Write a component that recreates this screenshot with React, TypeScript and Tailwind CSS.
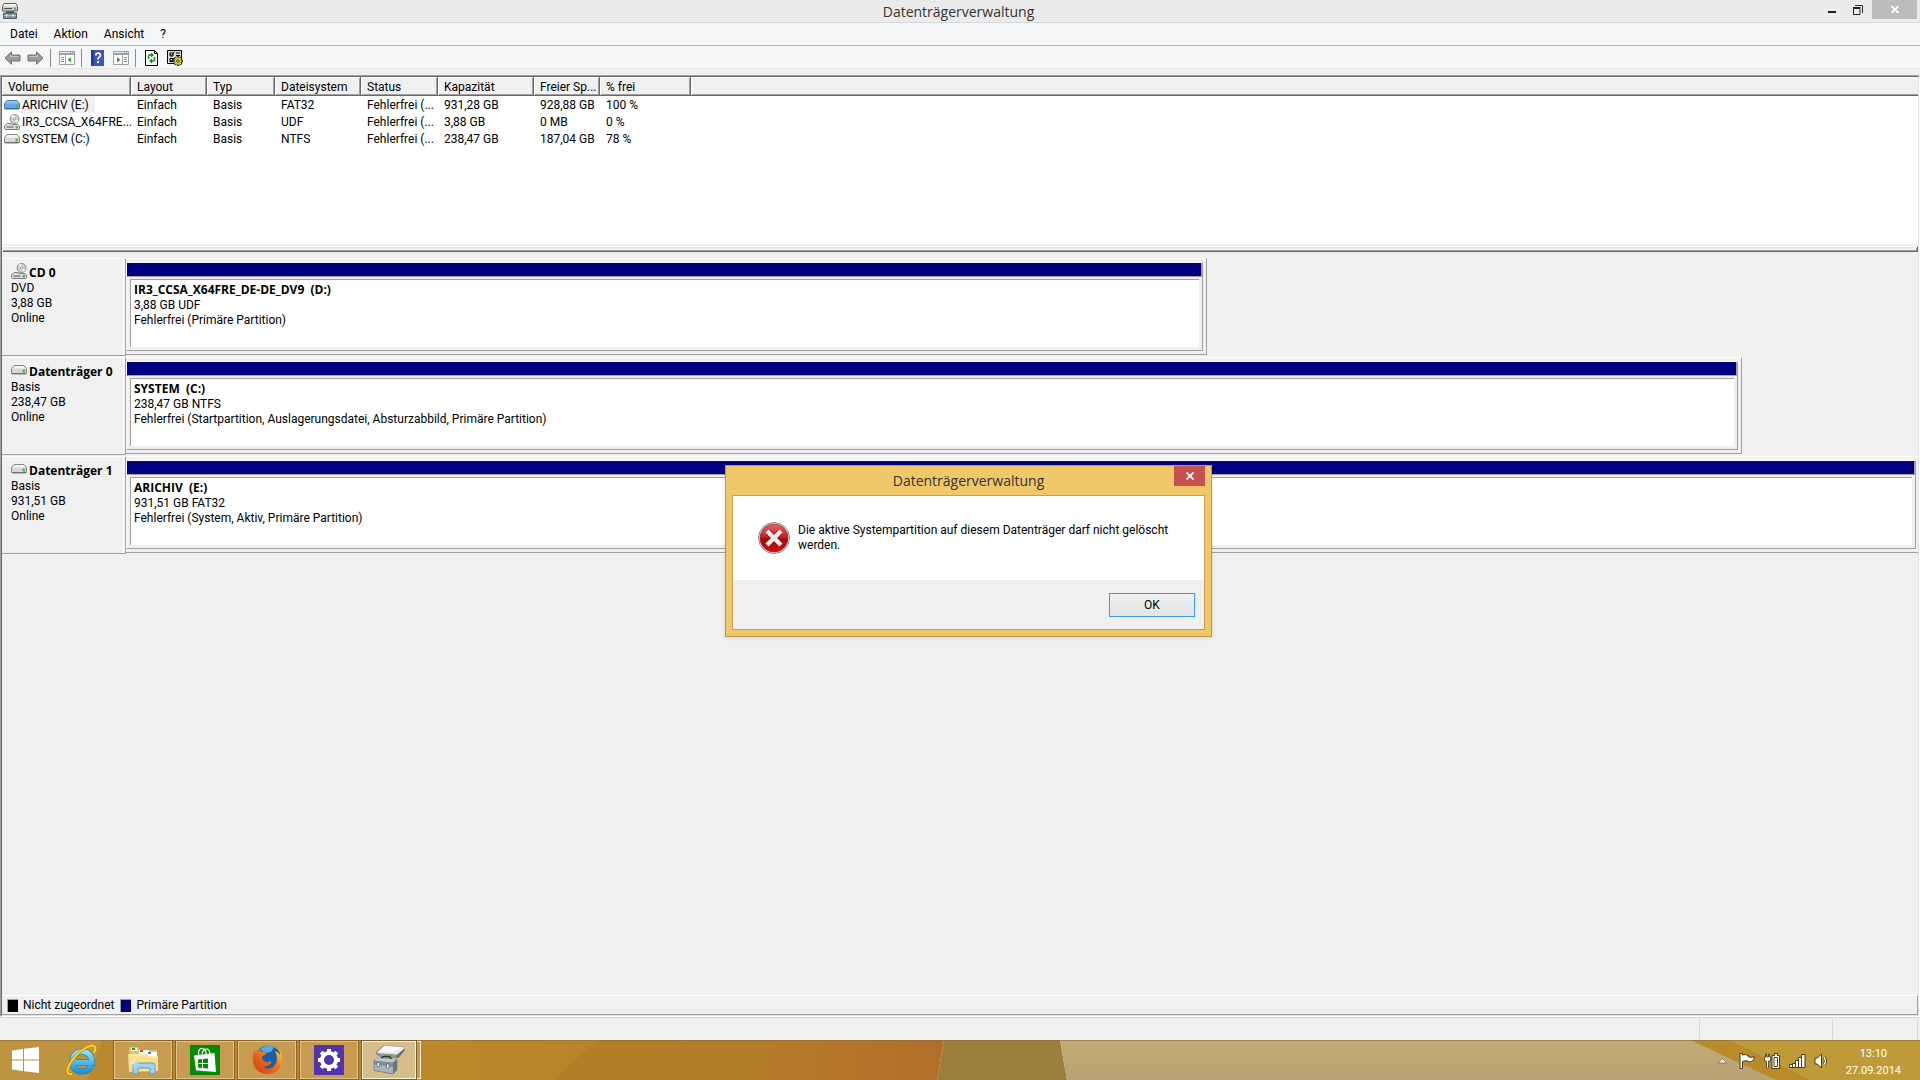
import type { ReactNode } from "react";

interface Volume {
    name: string;
    fileSystem: string;
    capacity: string;
    free: string;
    percent: string;
    icon: ReactNode;
}

interface Disk {
    name: string;
    type: string;
    size: string;
    icon: ReactNode;
    partition: string;
    partitionSize: string;
    status: string;
    widthClass: string;
    frameClass: string;
}

function DriveIcon({ blue = false }: { blue?: boolean }) {
    return (
        <svg width="16" height="10" viewBox="0 0 16 10" className="shrink-0">
            <path
                d="M3 .5h10l2.5 3v4.5q0 1-1 1h-13q-1 0-1-1v-4.500z"
                fill={blue ? "#6aa9e0" : "#d8d8dc"}
                stroke={blue ? "#3d7fbd" : "#85858a"}
            />
            <path d="M3.500 1h9l2 2.500h-13z" fill={blue ? "#93c6f0" : "#f4f4f4"} />
            <path d="M1 8.500h14" stroke={blue ? "#2f6ba6" : "#6d6d72"} />
            <rect x="11.500" y="4.500" width="2.500" height="3" fill="#4fc02c" />
        </svg>
    );
}

function DiscDriveIcon() {
    return (
        <svg width="16" height="16" viewBox="0 0 16 16" className="shrink-0">
            <circle cx="10.500" cy="5" r="4.500" fill="#d4d4d4" stroke="#8a8a8a" />
            <path d="M10.500 5 7.500 2l2-1.200zM10.500 5l3.500 2-1.500 1.800z" fill="#fff" />
            <path d="M10.500 5l3.800-1.500v2z" fill="#b9d7a6" />
            <circle cx="10.500" cy="5" r="1.200" fill="#fff" stroke="#8a8a8a" strokeWidth=".8" />
            <path d="M3 9.500h3l3 1h4.500l2 1.500v2.500q0 1-1 1h-13q-1 0-1-1v-2.500z" fill="#dfdfe1" stroke="#7b7b80" />
            <path d="M2.500 13h7" stroke="#4d4d52" />
            <rect x="11.500" y="12" width="2.500" height="2.500" fill="#4fc02c" />
        </svg>
    );
}

function SmallAppIcon() {
    return (
        <svg width="16" height="16" viewBox="0 0 16 16">
            <path d="M2 .5h12l1.500 3v4.500h-15v-4.500z" fill="#c9cbcd" stroke="#5d6165" />
            <path d="M2.500 1h11l1.200 2.500h-13.400z" fill="#f3f3f3" />
            <path d="M2 5.500h8" stroke="#4a4d50" />
            <path d="M12 4.500h2v2.500h-2z" fill="#35d035" />
            <path d="M4 9.500h8" stroke="#33393d" strokeWidth="2" />
            <path d="M1.500 10h13v5.500h-13z" fill="#7c929c" stroke="#4e616b" />
            <path d="M2 12.500h12" stroke="#b6c5cc" />
            <path d="M4 11.500h1.500v2h-1.500zM10.500 11.500h1.500v2h-1.500z" fill="#e3eaed" />
        </svg>
    );
}

function AppIcon() {
    return (
        <svg width="32" height="32" viewBox="0 0 32 32">
            <path d="M10 1.500 30 3q2 1 1.500 3l-6 7.500-18-1-4-2.500v-2z" fill="#96999b" stroke="#6c6f71" strokeWidth=".6" />
            <path d="M11 1.500 30 3l1.500 1.500-7 6-20-1.500v-1z" fill="#e9eaea" />
            <path d="M12 2.500 28 3.500l-6 4.500-14-1z" fill="#f8f8f8" />
            <path d="M24 11l7-6v2l-6 7h-2z" fill="#6b6e70" />
            <path d="M15.500 10.500h3v4h-3z" fill="#37c837" />
            <path d="M8 18v-2q.5-3.500 4-3.500h3q3 .3 3.500 3.500v2" fill="none" stroke="#2d3336" strokeWidth="1.500" />
            <path d="M1 16.500 4 14l20 1.500v10l-4 4.500-19-3.500z" fill="#7f8f98" stroke="#5c6b73" strokeWidth=".6" />
            <path d="M1 16.500 4 14l20 1.500-4 3z" fill="#bac7cd" />
            <path d="M1.500 20.500l18.500 2.500v6.500l-18.500-3.500z" fill="#a6b4bc" />
            <path d="M20 18.500l4-3v10l-4 4.500z" fill="#697981" />
            <path d="M4 18.500h2.500v4h-2.500zM13.500 20h2.500v4h-2.500z" fill="#eef2f4" stroke="#54626a" strokeWidth=".7" />
        </svg>
    );
}

const volumes: Volume[] = [
    { name: "ARICHIV (E:)", fileSystem: "FAT32", capacity: "931,28 GB", free: "928,88 GB", percent: "100 %", icon: <DriveIcon blue /> },
    { name: "IR3_CCSA_X64FRE...", fileSystem: "UDF", capacity: "3,88 GB", free: "0 MB", percent: "0 %", icon: <DiscDriveIcon /> },
    { name: "SYSTEM (C:)", fileSystem: "NTFS", capacity: "238,47 GB", free: "187,04 GB", percent: "78 %", icon: <DriveIcon /> },
];

const disks: Disk[] = [
    {
        name: "CD 0",
        type: "DVD",
        size: "3,88 GB",
        icon: <DiscDriveIcon />,
        partition: "IR3_CCSA_X64FRE_DE-DE_DV9  (D:)",
        partitionSize: "3,88 GB UDF",
        status: "Fehlerfrei (Primäre Partition)",
        widthClass: "w-[60.3%]",
        frameClass: "border-r pr-[3px]",
    },
    {
        name: "Datenträger 0",
        type: "Basis",
        size: "238,47 GB",
        icon: <DriveIcon />,
        partition: "SYSTEM  (C:)",
        partitionSize: "238,47 GB NTFS",
        status: "Fehlerfrei (Startpartition, Auslagerungsdatei, Absturzabbild, Primäre Partition)",
        widthClass: "w-[90.2%]",
        frameClass: "border-r pr-[3px]",
    },
    {
        name: "Datenträger 1",
        type: "Basis",
        size: "931,51 GB",
        icon: <DriveIcon />,
        partition: "ARICHIV  (E:)",
        partitionSize: "931,51 GB FAT32",
        status: "Fehlerfrei (System, Aktiv, Primäre Partition)",
        widthClass: "w-full",
        frameClass: "pr-[2px]",
    },
];

const columns = [
    { label: "Volume", width: "w-[129px]" },
    { label: "Layout", width: "w-[76px]" },
    { label: "Typ", width: "w-[68px]" },
    { label: "Dateisystem", width: "w-[86px]" },
    { label: "Status", width: "w-[77px]" },
    { label: "Kapazität", width: "w-[96px]" },
    { label: "Freier Sp...", width: "w-[66px]" },
    { label: "% frei", width: "w-[91px]" },
];

function TitleBar() {
    return (
        <header className="flex h-[23px] shrink-0 items-start border-b border-[#d6d9dc] bg-[#ebebeb]">
            <div className="w-[98px] pt-[3px] pl-[2px]">
                <SmallAppIcon />
            </div>
            <h1 className="flex-1 text-center font-['Open_Sans',sans-serif] text-[14px] leading-[23px] text-[#333]">
                Datenträgerverwaltung
            </h1>
            <div className="mr-[3px] flex">
                <button type="button" aria-label="Minimieren" className="flex h-[19px] w-[26px] items-center justify-center">
                    <svg width="8" height="14" viewBox="0 0 8 14">
                        <path d="M0 8h8v2h-8z" fill="#222" />
                    </svg>
                </button>
                <button type="button" aria-label="Verkleinern" className="mr-px flex h-[19px] w-[26px] items-center justify-center">
                    <svg width="10" height="10" viewBox="0 0 10 10" fill="none" stroke="#222">
                        <path d="M2 .5h7.500v7.500" />
                        <path d="M.5 3.500h6.500v6h-6.500zM0 2.500h7.500" />
                    </svg>
                </button>
                <button type="button" aria-label="Schließen" className="flex h-[19px] w-[45px] items-center justify-center bg-[#bcbcbc]">
                    <svg width="8" height="7" viewBox="0 0 8 7" stroke="#fff" strokeWidth="1.700">
                        <path d="M.5 0l7 7M7.500 0l-7 7" />
                    </svg>
                </button>
            </div>
        </header>
    );
}

function MenuBar() {
    return (
        <nav className="flex h-[23px] shrink-0 items-center gap-4 border-b border-[#b0b2b5] bg-[#f5f6f8] pl-[10px]">
            <button type="button">Datei</button>
            <button type="button">Aktion</button>
            <button type="button">Ansicht</button>
            <button type="button">?</button>
        </nav>
    );
}

function PanelIcon({ flip = false }: { flip?: boolean }) {
    return (
        <svg width="16" height="14" viewBox="0 0 16 14">
            <path d="M.5.5h15v13h-15z" fill="#fff" stroke="#9aa0a8" />
            <path d="M0 0h16v4h-16z" fill="#9aa0a8" />
            <path d="M1 1.500h10M12 1.500h1M14 1.500h1" stroke="#e8ebef" />
            <path d={flip ? "M9.500 4v9" : "M6.500 4v9"} stroke="#9aa0a8" />
            <path d={flip ? "M11 6.500h3M11 8.500h3M11 10.500h3" : "M2 6.500h3M2 8.500h3M2 10.500h3"} stroke="#6f8fb8" />
            <path d={flip ? "M4 6v5.500l3.500-2.700z" : "M12 6v5.500l-3.500-2.700z"} fill="#3aa52c" />
        </svg>
    );
}

function ArrowIcon({ flip = false }: { flip?: boolean }) {
    return (
        <svg width="17" height="14" viewBox="0 0 17 14">
            <path
                d={flip ? "M16 7 9.500.8v3.200h-8.500v6h8.500v3.200z" : "M1 7l6.500-6.200v3.200h8.500v6h-8.500v3.200z"}
                fill="#9b9b9b"
                stroke="#707070"
            />
            <path d={flip ? "M2 5.500h8.500v-2" : "M15 5.500h-8.500v-2"} fill="none" stroke="#c4c4c4" />
        </svg>
    );
}

function ToolBar() {
    return (
        <div className="flex h-[23px] shrink-0 items-center border-b border-[#e4e6e9] bg-[#f5f6f8] pt-[2px] pl-1">
            <div className="flex gap-[6px]">
                <button type="button" aria-label="Zurück">
                    <ArrowIcon />
                </button>
                <button type="button" aria-label="Vorwärts">
                    <ArrowIcon flip />
                </button>
            </div>
            <div className="ml-[6px] h-[18px] w-px bg-[#8c8c8c]" />
            <button type="button" aria-label="Konsolenstruktur einblenden" className="mr-[6px] ml-2">
                <PanelIcon />
            </button>
            <div className="mr-[9px] h-[18px] w-px bg-[#8c8c8c]" />
            <button type="button" aria-label="Hilfe">
                <svg width="13" height="16" viewBox="0 0 13 16">
                    <path d="M0 0h13v16h-13z" fill="#3a55bd" />
                    <path d="M0 0h2.500v16h-2.500z" fill="#23378f" />
                    <path d="M4.800 5.500q0-2.300 2.300-2.300t2.300 2.100q0 1.300-1.200 2-1.200.7-1.200 2.200" fill="none" stroke="#fff" strokeWidth="1.800" />
                    <path d="M6 11h2v2h-2z" fill="#fff" />
                </svg>
            </button>
            <button type="button" aria-label="Aktionsbereich einblenden" className="mr-[6px] ml-[9px]">
                <PanelIcon flip />
            </button>
            <div className="mr-[9px] h-[18px] w-px bg-[#8c8c8c]" />
            <button type="button" aria-label="Aktualisieren">
                <svg width="13" height="16" viewBox="0 0 13 16">
                    <path d="M.5.5h9l3 3v12h-12z" fill="#fff" stroke="#000" />
                    <path d="M9.500.5v3h3" fill="none" stroke="#000" />
                    <path d="M3.500 9v-3q0-1 1-1h2M9.500 7v3q0 1-1 1h-2" fill="none" stroke="#118a11" strokeWidth="1.500" />
                    <path d="M6 2.500v5l3-2.500zM7 8.500v5l-3-2.500z" fill="#118a11" />
                </svg>
            </button>
            <button type="button" aria-label="Einstellungen" className="ml-[9px]">
                <svg width="16" height="16" viewBox="0 0 16 16">
                    <path d="M.5.5h14v13h-14z" fill="#ddd" stroke="#000" />
                    <path d="M3 3h3v3h-3zM3 8.500h3v3h-3z" fill="#fff" stroke="#000" />
                    <path d="M3 4l1.500 1.500 3-4M3 10l1.500 1 2-3M9 3h4M9 5.500h4" fill="none" stroke="#000" />
                    <path
                        d="M11 6v10M6 11h10M7.500 7.500l7 7M14.500 7.500l-7 7"
                        stroke="#000"
                        strokeWidth="2.400"
                    />
                    <path d="M11 6.500v9M6.500 11h9M8 8l6 6M14 8l-6 6" stroke="#f0e020" strokeWidth="1.200" />
                    <circle cx="11" cy="11" r="3" fill="#f0e020" />
                    <circle cx="11" cy="11" r="1.300" fill="#fff" stroke="#000" strokeWidth=".8" />
                </svg>
            </button>
        </div>
    );
}

function VolumeTable() {
    return (
        <section className="h-[167px] shrink-0 bg-white">
            <table className="w-full table-fixed border-separate border-spacing-0 text-left">
                <thead>
                    <tr className="h-[19px]">
                        {columns.map((column) => (
                            <th
                                key={column.label}
                                className={`${column.width} h-[19px] overflow-hidden border-r border-b border-[#696969] bg-[#f0f0f0] p-0 pt-[2px] pl-[6px] leading-[16px] font-normal whitespace-nowrap shadow-[inset_1px_1px_0_#fff,inset_-1px_-1px_0_#a0a0a0]`}
                            >
                                {column.label}
                            </th>
                        ))}
                        <td className="border-b border-[#696969] bg-[#f0f0f0] shadow-[inset_1px_1px_0_#fff,inset_0_-1px_0_#a0a0a0]" />
                    </tr>
                </thead>
                <tbody className="leading-[15px] whitespace-nowrap">
                    {volumes.map((volume, index) => (
                        <tr key={volume.name} className="h-[17px]">
                            <td className="p-0 pl-[2px]">
                                <div className="flex h-[17px] items-center">
                                    {volume.icon}
                                    <span className={`pt-[2px] pl-[2px] ${index === 0 ? "bg-[#f0f0f0] pr-[6px]" : ""}`}>
                                        {volume.name}
                                    </span>
                                </div>
                            </td>
                            <td className="p-0 pt-[2px] pl-[6px]">Einfach</td>
                            <td className="p-0 pt-[2px] pl-[6px]">Basis</td>
                            <td className="p-0 pt-[2px] pl-[6px]">{volume.fileSystem}</td>
                            <td className="p-0 pt-[2px] pl-[6px]">Fehlerfrei (...</td>
                            <td className="p-0 pt-[2px] pl-[6px]">{volume.capacity}</td>
                            <td className="p-0 pt-[2px] pl-[6px]">{volume.free}</td>
                            <td className="p-0 pt-[2px] pl-[6px]">{volume.percent}</td>
                            <td />
                        </tr>
                    ))}
                </tbody>
            </table>
        </section>
    );
}

function DiskRow({ disk }: { disk: Disk }) {
    return (
        <article className="flex h-[98px] leading-[15px]">
            <div className="w-[124px] shrink-0 border-t border-r border-b border-t-white border-r-[#a0a0a0] border-b-[#a0a0a0] pl-[9px] shadow-[inset_-1px_0_0_#f0f0f0,inset_-2px_0_0_#fff]">
                <div className="flex h-[21px] items-end font-['Open_Sans',sans-serif] font-bold whitespace-nowrap">
                    <span className="flex h-[18px] w-[18px] shrink-0 items-center">{disk.icon}</span>
                    {disk.name}
                </div>
                <div className="pt-px">
                    <p>{disk.type}</p>
                    <p>{disk.size}</p>
                    <p>Online</p>
                </div>
            </div>
            <div className="min-w-0 flex-1">
                <div className={`${disk.widthClass} ${disk.frameClass} h-[97px] border-t border-b border-t-white border-r-[#a0a0a0] border-b-[#a0a0a0] pt-[3px]`}>
                    <div className="h-[89px] border border-white border-r-[#a0a0a0] border-b-[#a0a0a0]">
                        <div className="h-[14px] border-r border-b border-[#a0a0a0] bg-[#000080]" />
                        <div className="mt-[2px] mr-[3px] ml-[3px] h-[68px] border-t border-l border-[#a0a0a0] bg-white pt-[2px] pl-[3px]">
                            <p className="font-['Open_Sans',sans-serif] font-bold whitespace-pre">{disk.partition}</p>
                            <div className="pt-px">
                                <p>{disk.partitionSize}</p>
                                <p>{disk.status}</p>
                            </div>
                        </div>
                    </div>
                </div>
            </div>
        </article>
    );
}

function Dialog() {
    return (
        <div
            role="dialog"
            aria-labelledby="dialog-title"
            className="absolute top-[465px] left-[725px] flex h-[172px] w-[487px] flex-col border border-[#b8984e] bg-[#f0c869] px-[6px] pb-[6px] shadow-[0_1px_4px_rgba(0,0,0,0.12)]"
        >
            <div className="flex h-[29px] shrink-0 items-start">
                <h2
                    id="dialog-title"
                    className="flex-1 pl-[31px] text-center font-['Open_Sans',sans-serif] text-[14px] leading-[29px] text-[#333]"
                >
                    Datenträgerverwaltung
                </h2>
                <button type="button" aria-label="Schließen" className="flex h-5 w-[31px] items-center justify-center bg-[#c75050]">
                    <svg width="8" height="8" viewBox="0 0 8 8" stroke="#fff" strokeWidth="1.700">
                        <path d="M.5.5l7 7M7.500.5l-7 7" />
                    </svg>
                </button>
            </div>
            <div className="flex flex-1 flex-col border border-[#c6a24e] bg-[#f0f0f0]">
                <div className="flex h-[84px] gap-2 bg-white pt-[26px] pl-[25px]">
                    <svg width="32" height="32" viewBox="0 0 32 32" className="shrink-0">
                        <defs>
                            <linearGradient id="err" x1="0" y1="0" x2="0" y2="1">
                                <stop offset="0" stopColor="#e0676a" />
                                <stop offset=".5" stopColor="#c01d20" />
                                <stop offset=".51" stopColor="#a50808" />
                                <stop offset="1" stopColor="#d01010" />
                            </linearGradient>
                        </defs>
                        <circle cx="16" cy="16" r="15.500" fill="#e8e8e8" stroke="#8a8a8a" />
                        <circle cx="16" cy="16" r="14" fill="url(#err)" stroke="#8e1515" strokeWidth=".6" />
                        <path d="M10 10l12 12M22 10l-12 12" stroke="#7c0c0c" strokeWidth="6" />
                        <path d="M9 9l14 14M23 9l-14 14" stroke="#ececec" strokeWidth="4.500" />
                    </svg>
                    <p className="w-[390px] pt-px leading-[15px]">
                        Die aktive Systempartition auf diesem Datenträger darf nicht gelöscht werden.
                    </p>
                </div>
                <div className="flex justify-end pt-[13px] pr-[9px]">
                    <button type="button" className="h-6 w-[86px] border border-[#3399ff] bg-linear-to-b from-[#f0f0f0] to-[#e5e5e5]">
                        OK
                    </button>
                </div>
            </div>
        </div>
    );
}

function TaskButton({ label, children, active = false }: { label: string; children: ReactNode; active?: boolean }) {
    return (
        <button
            type="button"
            aria-label={label}
            className={
                active
                    ? "flex h-[38px] w-[54px] items-center justify-center border border-[#fff6e0] bg-[#d8bd8c] shadow-[0_0_0_1px_#7d5f2c]"
                    : "flex h-[38px] w-[58px] items-center justify-center border border-[#e2c48e] bg-[#c89b52] shadow-[0_0_0_1px_#8b6424]"
            }
        >
            {children}
        </button>
    );
}

function Wallpaper() {
    return (
        <svg className="absolute inset-0 h-full w-full" viewBox="0 0 1920 40" preserveAspectRatio="none">
            <defs>
                <linearGradient id="warm">
                    <stop offset="0" stopColor="#b98930" />
                    <stop offset=".45" stopColor="#bd8829" />
                    <stop offset=".8" stopColor="#b5802a" />
                    <stop offset=".92" stopColor="#b57428" />
                    <stop offset="1" stopColor="#b06e29" />
                </linearGradient>
                <linearGradient id="shade">
                    <stop offset="0" stopColor="#a86c28" stopOpacity=".3" />
                    <stop offset="1" stopColor="#a86c28" stopOpacity="0" />
                </linearGradient>
                <linearGradient id="sand" x1="0" y1="0" x2="0" y2="1">
                    <stop offset="0" stopColor="#c4ab79" />
                    <stop offset="1" stopColor="#b9a273" />
                </linearGradient>
            </defs>
            <path d="M0 0h944l-7 40h-937z" fill="url(#warm)" />
            <path d="M0 0h102l-15 40h-87z" fill="#bf9440" />
            <path d="M597 0h347l-7 40h-384z" fill="url(#shade)" />
            <path d="M944 0h116l7 40h-130z" fill="#9b7e3c" />
            <path d="M1060 0h640l80 40h-713z" fill="url(#sand)" />
            <path d="M1690 0h60l60 40h-34z" fill="#b98b29" />
            <path d="M1730 0h190v40h-110z" fill="#bf9a39" />
            <path d="M0 .5h1920" stroke="#8a6a3a" opacity=".6" />
        </svg>
    );
}

function TrayIcons() {
    return (
        <div className="flex items-center gap-2">
            <svg width="9" height="6" viewBox="0 0 9 6">
                <path d="M4.500.5 8.500 5h-8z" fill="#fff" stroke="#6d5a30" strokeWidth=".7" />
            </svg>
            <svg width="17" height="16" viewBox="0 0 17 16" className="ml-1">
                <path d="M1 .5h2.500v1.500q3-1 6 .5l-.3 1.200q2.500 1.300 6.300 0-1 4.800-4.500 5.300-1.500 0-2-1-3-.8-5.500.5v7h-2.500z" fill="#fff" stroke="#4a3a18" />
            </svg>
            <svg width="17" height="16" viewBox="0 0 17 16">
                <path d="M9 2.500h1.500v-2h3v2h2v13h-7.500v-13z" fill="#fff" stroke="#4a3a18" />
                <path d="M10 4.500h3.500v9h-3.500z" fill="#fff" stroke="#4a3a18" />
                <path d="M1.500 1v3h-1v4h2v7h2v-7h2v-4h-1v-3h-1v3h-2v-3z" fill="#fff" stroke="#4a3a18" strokeWidth=".8" />
            </svg>
            <svg width="17" height="14" viewBox="0 0 17 14" fill="#fff" stroke="#4a3a18">
                <path d="M.5 10.500h3v3h-3zM3.500 9.500h3v4h-3zM6.500 6.500h3v7h-3zM9.500 3.500h3v10h-3zM12.500.5h3.500v13h-3.500z" />
            </svg>
            <svg width="15" height="16" viewBox="0 0 15 16">
                <path d="M1 5h2.500l4-4v14l-4-4h-2.500z" fill="#fff" stroke="#4a3a18" />
                <path d="M10 4.500q3 3.500 0 7" fill="none" stroke="#4a3a18" strokeWidth="3" />
                <path d="M10 4.500q3 3.500 0 7" fill="none" stroke="#fff" strokeWidth="1.400" />
            </svg>
        </div>
    );
}

function Taskbar() {
    return (
        <footer className="relative h-10 shrink-0">
            <Wallpaper />
            <div className="relative flex h-full items-center">
                <button type="button" aria-label="Start" className="ml-3">
                    <svg width="27" height="26" viewBox="0 0 27 26" fill="#fff">
                        <path d="M0 3.500 11 2v10.500h-11zM12 1.800 27 0v12.500h-15zM0 13.500h11v10.500l-11-1.500zM12 13.500h15v12.500l-15-1.800z" />
                    </svg>
                </button>
                <button type="button" aria-label="Internet Explorer" className="ml-[27px]">
                    <svg width="31" height="32" viewBox="0 0 31 32">
                        <defs>
                            <linearGradient id="ie" x1="0" y1="0" x2="0" y2="1">
                                <stop offset="0" stopColor="#8fe0fb" />
                                <stop offset="1" stopColor="#1b96d8" />
                            </linearGradient>
                        </defs>
                        <path d="M25 21.500q-2.500 6-9 6-9.500-.5-9.500-10 .5-9.500 10-10 9 .5 9.500 11h-18" fill="none" stroke="#1777b0" strokeWidth="6" />
                        <path d="M25 21.500q-2.500 6-9 6-9.500-.5-9.500-10 .5-9.500 10-10 9 .5 9.500 11h-18" fill="none" stroke="url(#ie)" strokeWidth="5" />
                        <path d="M6 30q-6 1-4-6 4-11 16-19 9-6 11-2 1 2-1 6" fill="none" stroke="#b88409" strokeWidth="3" />
                        <path d="M6 30q-6 1-4-6 4-11 16-19 9-6 11-2 1 2-1 6" fill="none" stroke="#fbd12c" strokeWidth="2" />
                    </svg>
                </button>
                <div className="ml-[17px] flex gap-1">
                    <TaskButton label="Explorer">
                        <svg width="32" height="30" viewBox="0 0 32 30">
                            <path d="M2 4q0-2 2-2h7l2 3h17v20h-28z" fill="#e3c35f" />
                            <path d="M4 3h6v3h-6z" fill="#fff" />
                            <path d="M5 3h3v2h-3z" fill="#14a63c" />
                            <path d="M12 5h10v4h-10z" fill="#fff" />
                            <path d="M13 5h3v2h-3z" fill="#d9402a" />
                            <path d="M20 7h10v4h-10z" fill="#fff" />
                            <path d="M21 7h3v2h-3z" fill="#2f86d9" />
                            <path d="M1 9h18l2 2h10v15l-29 1z" fill="#f6e08d" />
                            <path d="M2 10h17l2 2h9" stroke="#fff6c8" fill="none" />
                            <path d="M6 29v-9q0-2 2-2h18q2 0 2 2v9h-5v-6h-12v6z" fill="#9fd2ec" stroke="#5b9fc6" />
                            <path d="M7 13v10M2 18h10" stroke="#fff" opacity=".7" />
                        </svg>
                    </TaskButton>
                    <TaskButton label="Store">
                        <svg width="30" height="30" viewBox="0 0 30 30">
                            <path d="M0 0h30v30h-30z" fill="#048a04" />
                            <path d="M4 10.500 24.500 8l1.500 19-20-1.500z" fill="#fff" />
                            <path d="M8.500 11v-4q1-4 4-3.500 3 .5 3.500 4v2M12 9q1-5 4.500-5 3 0 3.500 5" fill="none" stroke="#fff" strokeWidth="1.200" />
                            <path d="M8 14.500l4-.5v4h-4zM13 14l5-.6v4.600h-5zM8 19h4v4l-4-.5zM13 19h5v4.600l-5-.5z" fill="#048a04" />
                        </svg>
                    </TaskButton>
                    <TaskButton label="Firefox">
                        <svg width="30" height="30" viewBox="0 0 30 30">
                            <defs>
                                <linearGradient id="fox" x1="0" y1="1" x2="1" y2="0">
                                    <stop offset="0" stopColor="#cf3516" />
                                    <stop offset=".6" stopColor="#ee7a1a" />
                                    <stop offset="1" stopColor="#ffe14a" />
                                </linearGradient>
                            </defs>
                            <circle cx="16" cy="13.500" r="13" fill="#1d5fa8" />
                            <path d="M8 4q7-6 14-2l-3 5-6 1z" fill="#56aee0" />
                            <path d="M1 5q1 2 3 1 2-3 4-2 0 3 3 3l3 1q0 2-3 3-2 1 0 4 4 4 7 1 3 1 0 3-4 4-8 2 7 6 13-1 4-6 0-14 5 2 5 5 1-5-4-8 7 4 6 13-2 13-15 13-14-1-14-15 0-6 1-9z" fill="url(#fox)" />
                        </svg>
                    </TaskButton>
                    <TaskButton label="Einstellungen">
                        <svg width="30" height="30" viewBox="0 0 30 30">
                            <path d="M0 0h30v30h-30z" fill="#5133ab" />
                            <circle cx="15" cy="15" r="7" fill="none" stroke="#fff" strokeWidth="4" />
                            <path d="M15 4v4M15 22v4M4 15h4M22 15h4M7.200 7.200l2.800 2.800M20 20l2.800 2.800M7.200 22.800l2.800-2.800M20 10l2.800-2.800" stroke="#fff" strokeWidth="4" />
                        </svg>
                    </TaskButton>
                    <div className="flex">
                        <TaskButton label="Datenträgerverwaltung" active>
                            <AppIcon />
                        </TaskButton>
                        <div className="ml-px h-[38px] w-1 border border-l-0 border-[#fff6e0] bg-[#c89b52]" />
                    </div>
                </div>
                <div className="ml-auto flex items-center gap-[17px] pt-[2px] pr-[19px]">
                    <TrayIcons />
                    <div className="pt-px text-center text-[11px] leading-[17px] text-white">
                        <p>13:10</p>
                        <p>27.09.2014</p>
                    </div>
                </div>
            </div>
        </footer>
    );
}

export default function App() {
    return (
        <div className="relative flex h-screen flex-col overflow-hidden bg-[#f0f0f0] font-['Roboto','Open_Sans',sans-serif] text-[12px] text-black">
            <TitleBar />
            <MenuBar />
            <ToolBar />

            <main className="mt-[6px] flex min-h-0 flex-1 flex-col border border-[#a0a0a0] border-r-white border-b-white">
                <div className="flex min-h-0 flex-1 flex-col border border-[#696969] border-r-[#e3e3e3] border-b-[#e3e3e3]">
                    <VolumeTable />
                    <div className="mt-[2px] ml-px h-[6px] shrink-0 border-t border-r border-b border-t-white border-r-[#696969] border-b-[#696969] shadow-[inset_0_1px_0_#e3e3e3,inset_-1px_-1px_0_#a0a0a0]" />

                    <div className="flex flex-1 flex-col gap-px pt-[6px]">
                        {disks.map((disk) => (
                            <DiskRow key={disk.name} disk={disk} />
                        ))}
                    </div>

                    <div className="flex h-5 shrink-0 items-center border-t border-r border-b border-t-white border-r-[#a0a0a0] border-b-[#a0a0a0] pl-[5px]">
                        <span className="h-[13px] w-[11px] border-t border-l border-[#a0a0a0] bg-black" />
                        <span className="pr-[6px] pl-[5px]">Nicht zugeordnet</span>
                        <span className="h-[13px] w-[11px] border-t border-l border-[#a0a0a0] bg-[#000080]" />
                        <span className="pl-[5px]">Primäre Partition</span>
                    </div>
                </div>
            </main>

            <div className="flex h-[23px] shrink-0 justify-end border-t border-[#d7d7d7] py-px pr-[2px]">
                <div className="w-[133px] border-l border-[#d7d7d7]" />
                <div className="w-[86px] border-x border-[#d7d7d7]" />
            </div>

            <Taskbar />
            <Dialog />
        </div>
    );
}
